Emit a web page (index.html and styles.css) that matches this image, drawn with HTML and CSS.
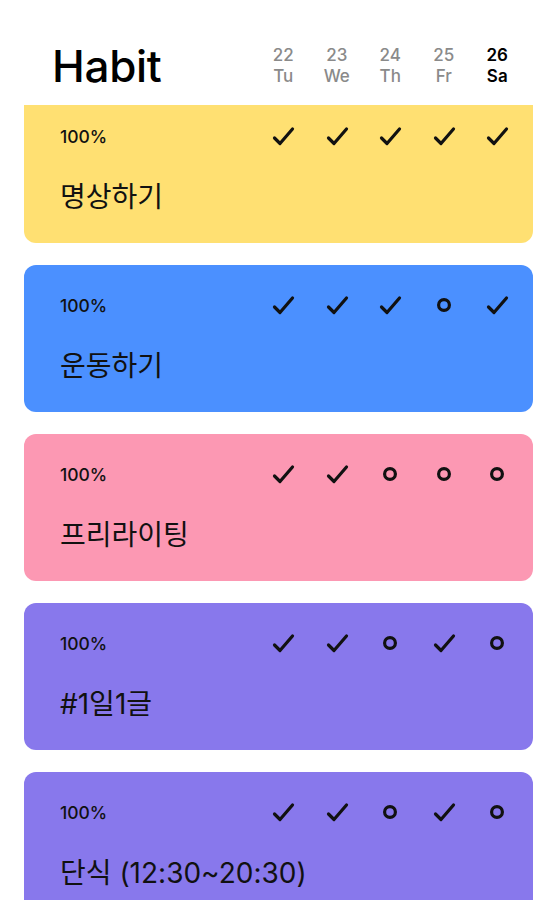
FILE: index.html
```html
<!DOCTYPE html>
<html lang="ko">
<head>
<meta charset="utf-8">
<link rel="stylesheet" href="styles.css">
</head>
<body>
<div class="app">
  <header class="header">
    <h1 class="title">Habit</h1>
    <div class="days">
      <div class="day"><span>22</span><span>Tu</span></div>
      <div class="day"><span>23</span><span>We</span></div>
      <div class="day"><span>24</span><span>Th</span></div>
      <div class="day"><span>25</span><span>Fr</span></div>
      <div class="day today"><span>26</span><span>Sa</span></div>
    </div>
  </header>
  <main class="list">
    <section class="card yellow first">
      <div class="row">
        <span class="pct">100%</span>
        <div class="marks">
          <svg class="chk" viewBox="0 0 24 22"><path d="M3.5 13 L9 18.5 L21.5 4"/></svg>
          <svg class="chk" viewBox="0 0 24 22"><path d="M3.5 13 L9 18.5 L21.5 4"/></svg>
          <svg class="chk" viewBox="0 0 24 22"><path d="M3.5 13 L9 18.5 L21.5 4"/></svg>
          <svg class="chk" viewBox="0 0 24 22"><path d="M3.5 13 L9 18.5 L21.5 4"/></svg>
          <svg class="chk" viewBox="0 0 24 22"><path d="M3.5 13 L9 18.5 L21.5 4"/></svg>
        </div>
      </div>
      <h2 class="name">명상하기</h2>
    </section>
    <section class="card blue">
      <div class="row">
        <span class="pct">100%</span>
        <div class="marks">
          <svg class="chk" viewBox="0 0 24 22"><path d="M3.5 13 L9 18.5 L21.5 4"/></svg>
          <svg class="chk" viewBox="0 0 24 22"><path d="M3.5 13 L9 18.5 L21.5 4"/></svg>
          <svg class="chk" viewBox="0 0 24 22"><path d="M3.5 13 L9 18.5 L21.5 4"/></svg>
          <svg class="dot" viewBox="0 0 24 22"><circle cx="12" cy="11" r="5.4"/></svg>
          <svg class="chk" viewBox="0 0 24 22"><path d="M3.5 13 L9 18.5 L21.5 4"/></svg>
        </div>
      </div>
      <h2 class="name">운동하기</h2>
    </section>
    <section class="card pink">
      <div class="row">
        <span class="pct">100%</span>
        <div class="marks">
          <svg class="chk" viewBox="0 0 24 22"><path d="M3.5 13 L9 18.5 L21.5 4"/></svg>
          <svg class="chk" viewBox="0 0 24 22"><path d="M3.5 13 L9 18.5 L21.5 4"/></svg>
          <svg class="dot" viewBox="0 0 24 22"><circle cx="12" cy="11" r="5.4"/></svg>
          <svg class="dot" viewBox="0 0 24 22"><circle cx="12" cy="11" r="5.4"/></svg>
          <svg class="dot" viewBox="0 0 24 22"><circle cx="12" cy="11" r="5.4"/></svg>
        </div>
      </div>
      <h2 class="name">프리라이팅</h2>
    </section>
    <section class="card purple">
      <div class="row">
        <span class="pct">100%</span>
        <div class="marks">
          <svg class="chk" viewBox="0 0 24 22"><path d="M3.5 13 L9 18.5 L21.5 4"/></svg>
          <svg class="chk" viewBox="0 0 24 22"><path d="M3.5 13 L9 18.5 L21.5 4"/></svg>
          <svg class="dot" viewBox="0 0 24 22"><circle cx="12" cy="11" r="5.4"/></svg>
          <svg class="chk" viewBox="0 0 24 22"><path d="M3.5 13 L9 18.5 L21.5 4"/></svg>
          <svg class="dot" viewBox="0 0 24 22"><circle cx="12" cy="11" r="5.4"/></svg>
        </div>
      </div>
      <h2 class="name">#1일1글</h2>
    </section>
    <section class="card purple">
      <div class="row">
        <span class="pct">100%</span>
        <div class="marks">
          <svg class="chk" viewBox="0 0 24 22"><path d="M3.5 13 L9 18.5 L21.5 4"/></svg>
          <svg class="chk" viewBox="0 0 24 22"><path d="M3.5 13 L9 18.5 L21.5 4"/></svg>
          <svg class="dot" viewBox="0 0 24 22"><circle cx="12" cy="11" r="5.4"/></svg>
          <svg class="chk" viewBox="0 0 24 22"><path d="M3.5 13 L9 18.5 L21.5 4"/></svg>
          <svg class="dot" viewBox="0 0 24 22"><circle cx="12" cy="11" r="5.4"/></svg>
        </div>
      </div>
      <h2 class="name">단식 (12:30~20:30)</h2>
    </section>
  </main>
</div>
</body>
</html>
```

FILE: styles.css
```css
* { box-sizing: border-box; }

html, body {
  margin: 0;
  padding: 0;
  background: #ffffff;
}

body {
  font-family: Inter, "Noto Sans CJK KR", sans-serif;
  color: #111111;
  overflow: hidden;
}

.app {
  width: 554px;
  height: 900px;
  overflow: hidden;
}

.header {
  position: sticky;
  top: 0;
  z-index: 2;
  height: 105px;
  background: #ffffff;
  display: flex;
  align-items: flex-start;
  justify-content: space-between;
  padding: 0 30px 0 52px;
}

.title {
  margin: 40px 0 0 0;
  font-size: 44px;
  line-height: 52px;
  font-weight: 500;
  letter-spacing: -0.3px;
  color: #000000;
}

.days {
  display: grid;
  grid-template-columns: repeat(5, 53.5px);
  margin-top: 45px;
}

.day {
  display: flex;
  flex-direction: column;
  align-items: center;
  font-size: 17px;
  line-height: 21px;
  font-weight: 500;
  color: #8a8a8a;
}

.day.today {
  color: #000000;
  font-weight: 600;
}

.list {
  display: flex;
  flex-direction: column;
  gap: 22px;
  padding: 0 21px 0 24px;
  margin-top: -9px;
}

.card {
  height: 147px;
  border-radius: 12px;
  padding: 28px 9px 0 36px;
}

.card.first {
  border-radius: 0 0 12px 12px;
}

.yellow { background: #ffe072; }
.blue { background: #4b90ff; }
.pink { background: #fc98b3; }
.purple { background: #8878ec; }

.row {
  display: flex;
  align-items: center;
  justify-content: space-between;
  height: 24px;
}

.pct {
  font-size: 17.5px;
  font-weight: 500;
  color: #111111;
}

.marks {
  display: grid;
  grid-template-columns: repeat(5, 53.5px);
  justify-items: center;
  align-items: center;
}

.chk, .dot {
  width: 24px;
  height: 22px;
  display: block;
}

.chk path {
  fill: none;
  stroke: #111111;
  stroke-width: 3.2;
  stroke-linecap: round;
  stroke-linejoin: round;
}

.dot circle {
  fill: none;
  stroke: #111111;
  stroke-width: 3.2;
}

.name {
  margin: 31px 0 0 0;
  font-size: 28px;
  line-height: 36px;
  font-weight: 400;
  color: #111111;
}
```
